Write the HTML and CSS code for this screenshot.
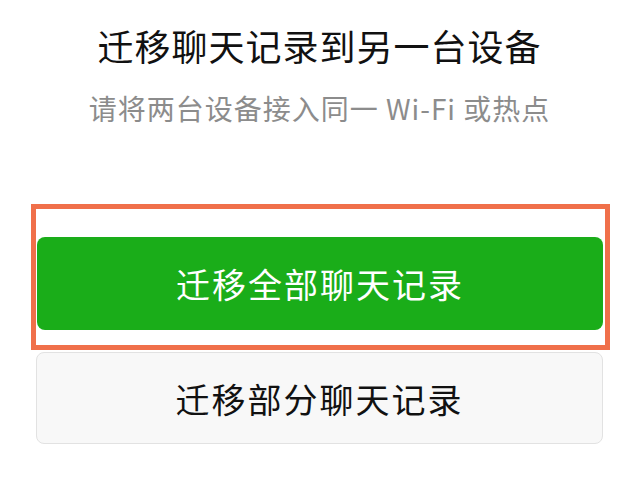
FILE: index.html
```html
<!DOCTYPE html>
<html lang="zh-CN">
<head>
    <meta charset="UTF-8">
    <meta name="viewport" content="width=device-width, initial-scale=1.0">
    <title>迁移聊天记录</title>
    <link rel="stylesheet" href="styles.css">
</head>
<body>
    <div class="page">
        <div class="header">
            <h1 class="title">迁移聊天记录到另一台设备</h1>
            <p class="subtitle">请将两台设备接入同一 Wi-Fi 或热点</p>
        </div>

        <div class="actions">
            <div class="highlight">
                <button class="btn btn-primary">迁移全部聊天记录</button>
            </div>
            <button class="btn btn-default">迁移部分聊天记录</button>
        </div>
    </div>
</body>
</html>
```

FILE: styles.css
```css
body {
    margin: 0;
    background-color: #fff;
    font-family: "Noto Sans CJK SC", "Noto Sans", sans-serif;
    color: #111;
}
.page {
    width: 639px;
    height: 479px;
    overflow: hidden;
}
.header {
    padding-top: 20px;
    text-align: center;
}
.title {
    margin: 0;
    font-size: 36px;
    font-weight: 400;
    line-height: 50px;
    letter-spacing: 1px;
}
.subtitle {
    margin: 18px 0 0;
    font-size: 28px;
    line-height: 40px;
    letter-spacing: 1px;
    color: #8c8c8c;
}
.actions {
    margin-top: 76px;
    padding: 0 30px 0 31px;
    display: flex;
    flex-direction: column;
    align-items: flex-start;
}
.highlight {
    width: 568px;
    padding: 28px 0 15px 1px;
    border: 5px solid #f0704a;
}
.btn {
    display: block;
    font-family: inherit;
    font-size: 34px;
    letter-spacing: 2px;
    border-radius: 8px;
    cursor: pointer;
}
.btn-primary {
    width: 566px;
    height: 93px;
    border: none;
    background-color: #1aad19;
    color: #fff;
}
.btn-default {
    width: 567px;
    height: 92px;
    margin: 2px 0 0 5px;
    border: 1px solid #e2e2e2;
    background-color: #f8f8f8;
    color: #111;
}
```
